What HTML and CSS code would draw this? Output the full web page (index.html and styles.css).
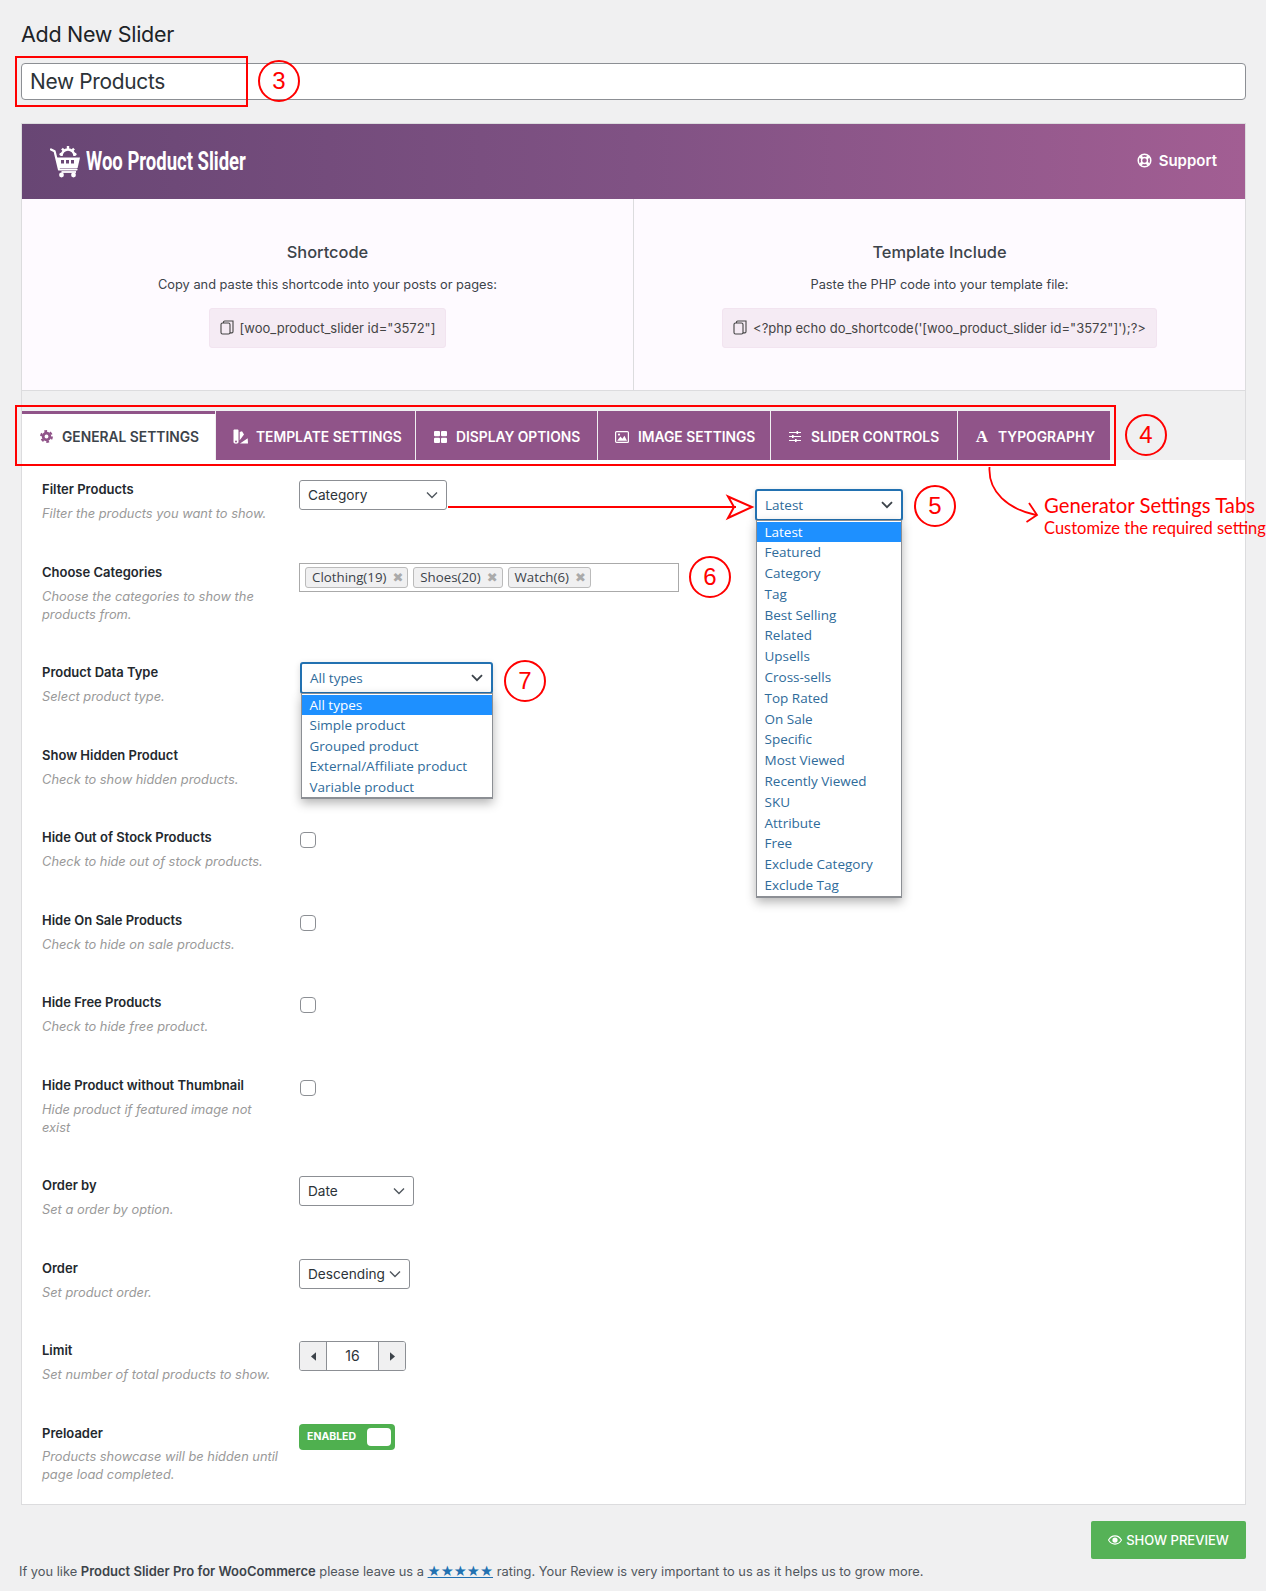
FILE: index.html
```html
<!DOCTYPE html>
<html lang="en">
<head>
<meta charset="utf-8">
<title>Add New Slider</title>
<link rel="stylesheet" href="styles.css">
</head>
<body>
<div class="wrap">
  <h1 class="page-title">Add New Slider</h1>
  <div class="title-input">New Products</div>

  <section class="panel">
    <header class="banner">
      <div class="logo">
        <svg class="logo-icon" viewBox="0 0 30 33" aria-hidden="true">
          <path d="M1 4.5 4.6 6.3 9 24.5H26.5" fill="none" stroke="#fff" stroke-width="2.2" stroke-linecap="round" stroke-linejoin="round"/>
          <path d="M6 12.5H30L27.6 23H8.4Z" fill="#fff"/>
          <path d="M11 15h3v3.5h-3zM16 15h3v3.5h-3zM21 15h3v3.5h-3z" fill="#6b4876"/>
          <circle cx="11.5" cy="30" r="2.4" fill="#fff"/>
          <circle cx="23.5" cy="30" r="2.4" fill="#fff"/>
          <path d="M11.5 27H26" stroke="#fff" stroke-width="1.8"/>
          <path d="M11.5 11a6.5 6.5 0 0 1 13 0" fill="none" stroke="#fff" stroke-width="2.4"/>
          <path d="M18 1v3M12 3.6l2 2.2M24 3.6l-2 2.2M9.6 8.8l2.6.8M26.4 8.8l-2.6.8" stroke="#fff" stroke-width="2.4"/>
        </svg>
        <span class="logo-text">Woo Product Slider</span>
      </div>
      <div class="support">
        <svg class="support-icon" viewBox="0 0 16 16" aria-hidden="true">
          <circle cx="8" cy="8" r="6.7" fill="none" stroke="#fff" stroke-width="1.6"/>
          <circle cx="8" cy="8" r="3.2" fill="none" stroke="#fff" stroke-width="1.5"/>
          <path d="M3.4 3.4 5.9 5.9M12.6 3.4 10.1 5.9M3.4 12.6 5.9 10.1M12.6 12.6 10.1 10.1" stroke="#fff" stroke-width="3"/>
        </svg>
        <span>Support</span>
      </div>
    </header>

    <div class="codes">
      <div class="code-col">
        <h2 class="code-title">Shortcode</h2>
        <p class="code-text">Copy and paste this shortcode into your posts or pages:</p>
        <div class="code-box">
          <svg class="copy-icon" viewBox="0 0 14 15" aria-hidden="true"><rect x="1" y="3" width="9" height="11" rx="1.5" fill="none" stroke="#444" stroke-width="1.1"/><path d="M3.5 3V2.2C3.5 1.5 4 1 4.7 1H13V11.5c0 .8-.5 1.4-1.2 1.4H10" fill="none" stroke="#444" stroke-width="1.1"/></svg>
          <span>[woo_product_slider id="3572"]</span>
        </div>
      </div>
      <div class="code-col">
        <h2 class="code-title">Template Include</h2>
        <p class="code-text">Paste the PHP code into your template file:</p>
        <div class="code-box">
          <svg class="copy-icon" viewBox="0 0 14 15" aria-hidden="true"><rect x="1" y="3" width="9" height="11" rx="1.5" fill="none" stroke="#444" stroke-width="1.1"/><path d="M3.5 3V2.2C3.5 1.5 4 1 4.7 1H13V11.5c0 .8-.5 1.4-1.2 1.4H10" fill="none" stroke="#444" stroke-width="1.1"/></svg>
          <span>&lt;?php echo do_shortcode('[woo_product_slider id="3572"]');?&gt;</span>
        </div>
      </div>
    </div>

    <nav class="tabs">
      <div class="tab tab-active tab-general">
        <span class="tab-icon"><svg viewBox="0 0 14 14" width="13" height="13" aria-hidden="true"><circle cx="7" cy="7" r="3.6" fill="none" stroke="#905489" stroke-width="3"/><circle cx="7" cy="7" r="5.8" fill="none" stroke="#905489" stroke-width="2.2" stroke-dasharray="3 3.07"/></svg></span>
        <span>GENERAL SETTINGS</span>
      </div>
      <div class="tab tab-template">
        <span class="tab-icon"><svg viewBox="0 0 15 15" width="15" height="15" aria-hidden="true"><path d="M.5 1.5C.5 1 1 .5 1.5.5h3c.5 0 1 .5 1 1v11.5c0 1-1 1.7-2.5 1.7S.5 14 .5 13Z" fill="#fff"/><path d="M6.7 3 9 2.2l2 3.2-4.3 5.8ZM7 14.5l7.7-5.2.3 5.2Z" fill="#fff"/><circle cx="3" cy="12.5" r="1" fill="#905489"/></svg></span>
        <span>TEMPLATE SETTINGS</span>
      </div>
      <div class="tab tab-display">
        <span class="tab-icon"><svg viewBox="0 0 13 12" width="13" height="12" aria-hidden="true"><rect x="0" y="0" width="6" height="5.3" rx="1" fill="#fff"/><rect x="7" y="0" width="6" height="5.3" rx="1" fill="#fff"/><rect x="0" y="6.7" width="6" height="5.3" rx="1" fill="#fff"/><rect x="7" y="6.7" width="6" height="5.3" rx="1" fill="#fff"/></svg></span>
        <span>DISPLAY OPTIONS</span>
      </div>
      <div class="tab tab-image">
        <span class="tab-icon"><svg viewBox="0 0 14 12" width="14" height="12" aria-hidden="true"><rect x=".6" y=".6" width="12.8" height="10.8" rx="1" fill="none" stroke="#fff" stroke-width="1.2"/><path d="M2.2 9.8 5.4 5.6l2 2.2 2-3 2.6 5Z" fill="#fff"/><circle cx="4" cy="3.6" r="1.1" fill="#fff"/></svg></span>
        <span>IMAGE SETTINGS</span>
      </div>
      <div class="tab tab-slider">
        <span class="tab-icon"><svg viewBox="0 0 12 11" width="12" height="11" aria-hidden="true"><path d="M0 1.5h12M0 5.5h12M0 9.5h12" stroke="#fff" stroke-width="1"/><path d="M7.5 0h1.6v3H7.5ZM3 4h1.6v3H3ZM6 8h1.6v3H6Z" fill="#fff"/></svg></span>
        <span>SLIDER CONTROLS</span>
      </div>
      <div class="tab tab-type">
        <span class="tab-icon tab-letter">A</span>
        <span>TYPOGRAPHY</span>
      </div>
    </nav>

    <div class="settings">
      <div class="row">
        <div class="row-info"><div class="row-label">Filter Products</div><div class="row-desc">Filter the products you want to show.</div></div>
        <div class="select select-filter"><span>Category</span><svg class="chev" viewBox="0 0 12 8" aria-hidden="true"><path d="M1 1.5 6 6.5 11 1.5" fill="none" stroke="#50575e" stroke-width="1.4"/></svg></div>
      </div>
      <div class="row row-tall">
        <div class="row-info"><div class="row-label">Choose Categories</div><div class="row-desc">Choose the categories to show the products from.</div></div>
        <div class="tags">
          <span class="tag">Clothing(19)<b class="tag-x">✖</b></span>
          <span class="tag">Shoes(20)<b class="tag-x">✖</b></span>
          <span class="tag">Watch(6)<b class="tag-x">✖</b></span>
        </div>
      </div>
      <div class="row">
        <div class="row-info"><div class="row-label">Product Data Type</div><div class="row-desc">Select product type.</div></div>
        <div class="select-open select-type">
          <div class="select-open-head"><span>All types</span><svg class="chev" viewBox="0 0 12 8" aria-hidden="true"><path d="M1 1.2 6 6.2 11 1.2" fill="none" stroke="#3c434a" stroke-width="1.8"/></svg></div>
          <ul class="options">
            <li class="option-on">All types</li>
            <li>Simple product</li>
            <li>Grouped product</li>
            <li>External/Affiliate product</li>
            <li>Variable product</li>
          </ul>
        </div>
      </div>
      <div class="row">
        <div class="row-info"><div class="row-label">Show Hidden Product</div><div class="row-desc">Check to show hidden products.</div></div>
      </div>
      <div class="row">
        <div class="row-info"><div class="row-label">Hide Out of Stock Products</div><div class="row-desc">Check to hide out of stock products.</div></div>
        <input class="check" type="checkbox" aria-label="Hide Out of Stock Products">
      </div>
      <div class="row">
        <div class="row-info"><div class="row-label">Hide On Sale Products</div><div class="row-desc">Check to hide on sale products.</div></div>
        <input class="check" type="checkbox" aria-label="Hide On Sale Products">
      </div>
      <div class="row">
        <div class="row-info"><div class="row-label">Hide Free Products</div><div class="row-desc">Check to hide free product.</div></div>
        <input class="check" type="checkbox" aria-label="Hide Free Products">
      </div>
      <div class="row row-tall">
        <div class="row-info"><div class="row-label">Hide Product without Thumbnail</div><div class="row-desc">Hide product if featured image not exist</div></div>
        <input class="check" type="checkbox" aria-label="Hide Product without Thumbnail">
      </div>
      <div class="row">
        <div class="row-info"><div class="row-label">Order by</div><div class="row-desc">Set a order by option.</div></div>
        <div class="select select-orderby"><span>Date</span><svg class="chev" viewBox="0 0 12 8" aria-hidden="true"><path d="M1 1.5 6 6.5 11 1.5" fill="none" stroke="#50575e" stroke-width="1.4"/></svg></div>
      </div>
      <div class="row">
        <div class="row-info"><div class="row-label">Order</div><div class="row-desc">Set product order.</div></div>
        <div class="select select-order"><span>Descending</span><svg class="chev" viewBox="0 0 12 8" aria-hidden="true"><path d="M1 1.5 6 6.5 11 1.5" fill="none" stroke="#50575e" stroke-width="1.4"/></svg></div>
      </div>
      <div class="row">
        <div class="row-info"><div class="row-label">Limit</div><div class="row-desc">Set number of total products to show.</div></div>
        <div class="spinner">
          <span class="spin-btn"><svg viewBox="0 0 6 10" width="5" height="9" aria-hidden="true"><path d="M6 0V10L0 5Z" fill="#3c434a"/></svg></span>
          <span class="spin-value">16</span>
          <span class="spin-btn"><svg viewBox="0 0 6 10" width="5" height="9" aria-hidden="true"><path d="M0 0V10L6 5Z" fill="#3c434a"/></svg></span>
        </div>
      </div>
      <div class="row">
        <div class="row-info"><div class="row-label">Preloader</div><div class="row-desc">Products showcase will be hidden until page load completed.</div></div>
        <div class="switch"><span>ENABLED</span><i class="switch-knob"></i></div>
      </div>
    </div>
  </section>

  <div class="actions">
    <div class="preview-btn">
      <svg class="eye" viewBox="0 0 16 11" aria-hidden="true"><path d="M.6 5.5C2.4 2.4 5 .8 8 .8s5.6 1.6 7.4 4.7C13.6 8.6 11 10.2 8 10.2S2.400 8.600.6 5.500Z" fill="none" stroke="#fff" stroke-width="1.2"/><circle cx="8" cy="5.500" r="3" fill="#fff"/></svg>
      <span>SHOW PREVIEW</span>
    </div>
  </div>
  <p class="footer-note">If you like <strong>Product Slider Pro for WooCommerce</strong> please leave us a <a class="stars">★★★★★</a> rating. Your Review is very important to us as it helps us to grow more.</p>
</div>

<div class="mark mark-title"></div>
<div class="mark mark-tabs"></div>
<div class="num num-3">3</div>
<div class="num num-4">4</div>
<div class="num num-5">5</div>
<div class="num num-6">6</div>
<div class="num num-7">7</div>

<svg class="arrows" viewBox="0 0 1266 1591" aria-hidden="true">
  <path d="M448 507H736" fill="none" stroke="#f00" stroke-width="2"/>
  <path d="M728 496.500 752 507 728 518 734 507Z" fill="none" stroke="#f00" stroke-width="2"/>
  <path d="M989.500 467C988 492 1008 509 1036 515" fill="none" stroke="#f00" stroke-width="1.800"/>
  <path d="M1029 503 1037 515 1026.500 522" fill="none" stroke="#f00" stroke-width="1.800"/>
</svg>

<div class="select-open select-latest">
  <div class="select-open-head"><span>Latest</span><svg class="chev" viewBox="0 0 12 8" aria-hidden="true"><path d="M1 1.200 6 6.200 11 1.200" fill="none" stroke="#3c434a" stroke-width="1.800"/></svg></div>
  <ul class="options">
    <li class="option-on">Latest</li>
    <li>Featured</li>
    <li>Category</li>
    <li>Tag</li>
    <li>Best Selling</li>
    <li>Related</li>
    <li>Upsells</li>
    <li>Cross-sells</li>
    <li>Top Rated</li>
    <li>On Sale</li>
    <li>Specific</li>
    <li>Most Viewed</li>
    <li>Recently Viewed</li>
    <li>SKU</li>
    <li>Attribute</li>
    <li>Free</li>
    <li>Exclude Category</li>
    <li>Exclude Tag</li>
  </ul>
</div>

<div class="note">
  <div class="note-title">Generator Settings Tabs</div>
  <div class="note-text">Customize the required setting</div>
</div>
</body>
</html>
```
FILE: styles.css
```css
* { box-sizing: border-box; }
html, body { margin: 0; padding: 0; }
body {
  position: relative;
  width: 1266px;
  height: 1591px;
  overflow: hidden;
  background: #f0f0f1;
  color: #3c434a;
  font-family: Inter, "Liberation Sans", sans-serif;
  font-size: 13px;
}
.wrap { padding: 20px 20px 0 21px; }
.page-title {
  margin: 0;
  font-size: 21.500px;
  font-weight: 400;
  line-height: 28px;
  color: #1d2327;
  letter-spacing: -0.3px;
}
.title-input {
  margin-top: 15.400px;
  height: 36.600px;
  width: 1225px;
  padding: 0 8px;
  background: #fff;
  border: 1px solid #8c8f94;
  border-radius: 4px;
  font-size: 20.900px;
  line-height: 36px;
  color: #2c3338;
  letter-spacing: -0.3px;
}
.panel {
  margin-top: 22.700px;
  width: 1225px;
  border: 1px solid #dcdcde;
  background: #fff;
}
.banner {
  height: 75.300px;
  display: flex;
  align-items: center;
  justify-content: space-between;
  padding: 0 28px 0 28px;
  background: linear-gradient(90deg, #684674 0%, #805284 50%, #a25e93 100%);
}
.logo { display: flex; align-items: center; gap: 6px; }
.logo-icon { width: 30px; height: 33px; display: block; }
.logo-text {
  display: inline-block;
  font-family: Roboto, sans-serif;
  font-weight: 700;
  font-size: 25px;
  color: #fff;
  transform: scaleX(0.74);
  transform-origin: left center;
}
.support {
  display: flex;
  align-items: center;
  gap: 7px;
  margin-bottom: 2px;
  color: #fff;
  font-size: 15px;
  font-weight: 600;
}
.support-icon { width: 15px; height: 15px; display: block; }
.codes {
  display: flex;
  background: #fefaff;
  border-bottom: 1px solid #dcdcde;
  height: 192px;
}
.code-col {
  flex: 1 1 50%;
  display: flex;
  flex-direction: column;
  align-items: center;
  padding-top: 41px;
}
.code-col:first-child { flex: 0 0 611px; }
.code-col + .code-col { border-left: 1px solid #dcdcde; }
.code-title {
  margin: 0;
  font-size: 16.400px;
  font-weight: 500;
  line-height: 24px;
  color: #3c434a;
}
.code-text {
  margin: 12px 0 0;
  line-height: 18px;
  font-size: 12.800px;
  color: #3c434a;
}
.code-box {
  margin-top: 14px;
  height: 40px;
  display: flex;
  align-items: center;
  gap: 6px;
  padding: 0 10px;
  background: #f5ebf4;
  border: 1px solid #f2e4f0;
  border-radius: 3px;
  font-size: 13px;
  color: #444;
}
.copy-icon { width: 14px; height: 15px; display: block; }
.tabs {
  display: flex;
  gap: 1px;
  padding-top: 20px;
  background: #f0f0f1;
}
.tab {
  flex: none;
  height: 49px;
  display: flex;
  align-items: center;
  gap: 8px;
  padding: 3px 0 0 16px;
  background: #905489;
  color: #fff;
  font-size: 13.800px;
  font-weight: 600;
  white-space: nowrap;
}
.tab-general { width: 193px; }
.tab-template { width: 199px; }
.tab-display { width: 181px; }
.tab-image { width: 172px; }
.tab-slider { width: 186px; }
.tab-type { width: 152px; }
.tab-active {
  padding-top: 0;
  background: #fff;
  color: #3c434a;
  border-top: 3px solid #905489;
}
.tab-icon {
  width: 16px;
  display: flex;
  justify-content: center;
  align-items: center;
}
.tab-letter {
  font-family: "Liberation Serif", serif;
  font-size: 17px;
  font-weight: 700;
}
.settings { padding: 20.500px 20px 0 20px; }
.row {
  display: flex;
  align-items: flex-start;
  padding-bottom: 39.800px;
}
.row:last-child { padding-bottom: 19.700px; }
.row-info { width: 257px; flex: none; }
.row-label {
  font-size: 13px;
  font-weight: 600;
  line-height: 18px;
  color: #23282d;
}
.row-desc {
  margin-top: 6.700px;
  width: 240px;
  line-height: 18px;
  font-size: 12.850px;
  font-style: italic;
  color: #999;
}
.select {
  height: 30px;
  display: flex;
  align-items: center;
  justify-content: space-between;
  padding: 0 8px;
  background: #fff;
  border: 1px solid #8c8f94;
  border-radius: 3px;
  font-size: 13.650px;
  color: #2c3338;
}
.chev { width: 12px; height: 8px; display: block; flex: none; }
.select-filter { width: 148px; }
.select-orderby { width: 115px; }
.select-order { width: 111px; }
.tags {
  width: 380px;
  height: 29px;
  display: flex;
  gap: 5px;
  align-items: center;
  padding: 0 5px;
  background: #fff;
  border: 1px solid #aaa;
}
.tag {
  height: 21px;
  display: flex;
  align-items: center;
  gap: 6px;
  padding: 0 4px 0 6px;
  background: #f0f0f1;
  border: 1px solid #bbb;
  border-radius: 3px;
  font-family: "Open Sans", sans-serif;
  font-size: 13.300px;
  color: #3c434a;
}
.tag-x { font-size: 13px; color: #aaa; font-weight: 400; font-family: "DejaVu Sans", sans-serif; }
.check {
  appearance: none;
  margin: 4px 0 0 1px;
  width: 16px;
  height: 16px;
  background: #fff;
  border: 1px solid #8c8f94;
  border-radius: 4px;
}
.spinner {
  width: 107px;
  height: 30px;
  display: flex;
  background: #fff;
  border: 1px solid #8c8f94;
  border-radius: 3px;
  overflow: hidden;
}
.spin-btn {
  width: 26px;
  flex: none;
  display: flex;
  align-items: center;
  justify-content: center;
  background: #f0f0f1;
}
.spin-value {
  flex: 1;
  text-align: center;
  line-height: 28px;
  font-size: 14px;
  color: #2c3338;
  border-left: 1px solid #8c8f94;
  border-right: 1px solid #8c8f94;
}
.switch {
  width: 96px;
  height: 26px;
  display: flex;
  align-items: center;
  justify-content: space-between;
  padding: 0 4px 0 8px;
  background: #4fb04f;
  border-radius: 4px;
  color: #fff;
  font-size: 10.500px;
  font-weight: 700;
}
.switch-knob {
  width: 24px;
  height: 18px;
  background: #fff;
  border-radius: 4px;
}
.actions {
  display: flex;
  justify-content: flex-end;
  width: 1225px;
  margin-top: 16px;
}
.preview-btn {
  width: 155px;
  height: 38px;
  display: flex;
  align-items: center;
  justify-content: center;
  gap: 4px;
  background: #56b257;
  border-radius: 2px;
  color: #fff;
  font-size: 13px;
  font-weight: 500;
}
.eye { width: 14px; height: 10px; display: block; }
.footer-note {
  margin: 2px 0 0 -2px;
  line-height: 20px;
  font-size: 12.850px;
  color: #50575e;
}
.footer-note strong { font-size: 13px; font-weight: 600; color: #3c434a; }
.stars { color: #2271b1; text-decoration: underline; font-family: "DejaVu Sans", sans-serif; font-size: 14.600px; line-height: 1; }

/* Open dropdowns */
.select-open { font-family: "Open Sans", sans-serif; font-size: 13.500px; color: #2f6b9a; }
.select-type { position: relative; width: 193px; margin: -1px 0 0 1px; z-index: 3; }
.select-latest { position: absolute; left: 755px; top: 489px; width: 147.500px; z-index: 3; }
.select-open-head {
  height: 31.500px;
  display: flex;
  align-items: center;
  justify-content: space-between;
  padding: 0 8px 0 8px;
  background: #fff;
  border: 2px solid #2271b1;
  border-radius: 3px;
  box-shadow: 0 2px 6px rgba(0, 0, 0, 0.15);
}
.options {
  position: absolute;
  left: 0.500px;
  right: 0.500px;
  top: 30.500px;
  margin: 0;
  padding: 1px 0 0;
  list-style: none;
  background: #fff;
  border: 1px solid #8c8f94;
  border-bottom-width: 2px;
  box-shadow: 0 4px 10px rgba(0, 0, 0, 0.3);
}
.options li { height: 20.500px; line-height: 20.500px; padding-left: 8px; }
.select-latest .options li { height: 20.800px; line-height: 20.800px; }
.options .option-on { background: #1e90ff; color: #fff; }

/* Annotations laid over the page */
.mark { position: absolute; border: 2px solid #f00; }
.mark-title { left: 15px; top: 56px; width: 233px; height: 51px; }
.mark-tabs { left: 15px; top: 405px; width: 1100.500px; height: 61px; }
.num {
  position: absolute;
  width: 42px;
  height: 42px;
  display: flex;
  align-items: center;
  justify-content: center;
  border: 2px solid #f00;
  border-radius: 50%;
  color: #f00;
  font-family: "Liberation Sans", sans-serif;
  font-size: 24px;
}
.num-3 { left: 258px; top: 60px; }
.num-4 { left: 1125px; top: 414px; }
.num-5 { left: 914px; top: 485px; }
.num-6 { left: 689px; top: 556px; }
.num-7 { left: 504px; top: 660px; }
.arrows { position: absolute; left: 0; top: 0; width: 1266px; height: 1591px; pointer-events: none; }
.note { position: absolute; left: 1044px; top: 492px; color: #f00; font-family: Lato, sans-serif; white-space: nowrap; }
.note-title { font-size: 20.300px; line-height: 26px; }
.note-text { font-size: 16.500px; line-height: 20px; }
```
